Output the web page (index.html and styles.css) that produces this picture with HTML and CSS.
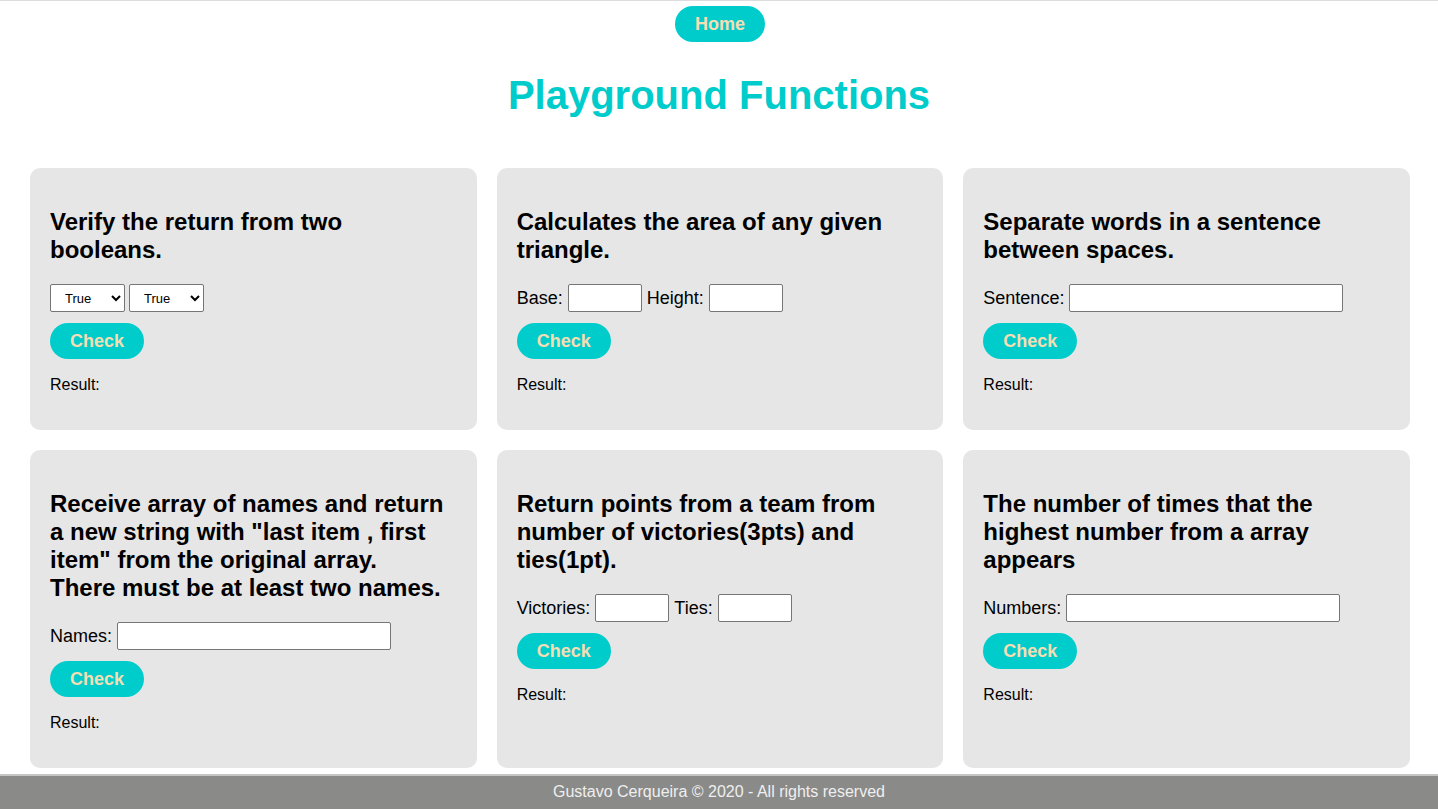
FILE: index.html
```html
<!DOCTYPE html>
<html lang="en">
<head>
<meta charset="utf-8">
<title>Playground Functions</title>
<link rel="stylesheet" href="styles.css">
</head>
<body>
<header class="top">
  <a class="pill home" href="#">Home</a>
</header>
<h1 class="title">Playground Functions</h1>
<main class="grid">
  <section class="card">
    <h2>Verify the return from two booleans.</h2>
    <div class="row row-selects">
      <select class="sel"><option>True</option><option>False</option></select>
      <select class="sel"><option>True</option><option>False</option></select>
    </div>
    <button class="pill check">Check</button>
    <p class="result">Result:</p>
  </section>
  <section class="card">
    <h2>Calculates the area of any given triangle.</h2>
    <div class="row">
      <label>Base:</label><input class="inp short" type="text">
      <label>Height:</label><input class="inp short" type="text">
    </div>
    <button class="pill check">Check</button>
    <p class="result">Result:</p>
  </section>
  <section class="card">
    <h2>Separate words in a sentence between spaces.</h2>
    <div class="row">
      <label>Sentence:</label><input class="inp long" type="text">
    </div>
    <button class="pill check">Check</button>
    <p class="result">Result:</p>
  </section>
  <section class="card">
    <h2>Receive array of names and return a new string with "last item , first item" from the original array. There must be at least two names.</h2>
    <div class="row">
      <label>Names:</label><input class="inp long" type="text">
    </div>
    <button class="pill check">Check</button>
    <p class="result">Result:</p>
  </section>
  <section class="card">
    <h2>Return points from a team from number of victories(3pts) and ties(1pt).</h2>
    <div class="row">
      <label>Victories:</label><input class="inp short" type="text">
      <label>Ties:</label><input class="inp short" type="text">
    </div>
    <button class="pill check">Check</button>
    <p class="result">Result:</p>
  </section>
  <section class="card">
    <h2>The number of times that the highest number from a array appears</h2>
    <div class="row">
      <label>Numbers:</label><input class="inp long" type="text">
    </div>
    <button class="pill check">Check</button>
    <p class="result">Result:</p>
  </section>
</main>
<footer class="footer">Gustavo Cerqueira © 2020 - All rights reserved</footer>
</body>
</html>
```

FILE: styles.css
```css
html, body {
  margin: 0;
  padding: 0;
}
body {
  font-family: "Liberation Sans", Arial, sans-serif;
  background: #ffffff;
  color: #000;
}
.top {
  border-top: 1px solid #dcdcdc;
  display: flex;
  justify-content: center;
  padding-top: 5px;
}
.pill {
  display: inline-flex;
  align-items: center;
  justify-content: center;
  height: 36px;
  padding: 0 20px;
  border: none;
  border-radius: 18px;
  background: #00cccc;
  color: #f5deb3;
  font-family: "Liberation Sans", Arial, sans-serif;
  font-size: 18px;
  font-weight: bold;
  text-decoration: none;
  box-sizing: border-box;
  cursor: pointer;
}
.home {
  margin-left: 2px;
}
.title {
  margin: 30px 0 0;
  text-align: center;
  color: #00cccc;
  font-size: 40px;
  line-height: 46px;
  font-weight: bold;
}
.grid {
  display: grid;
  grid-template-columns: repeat(3, 1fr);
  gap: 20px;
  padding: 0 28px 0 30px;
  margin: 50px 0 6px;
}
.card {
  background: #e6e6e6;
  border-radius: 10px;
  padding: 20px 30px 20px 20px;
  display: flex;
  flex-direction: column;
  align-items: flex-start;
}
.card h2 {
  margin: 20px 0;
  font-size: 24px;
  line-height: 28px;
  font-weight: bold;
}
.row {
  display: flex;
  align-items: center;
  gap: 5px;
  font-size: 18px;
  height: 28px;
}
.row-selects {
  gap: 4px;
}
.sel {
  width: 75px;
  height: 28px;
  font-size: 13px;
  font-family: "Liberation Sans", Arial, sans-serif;
  background: #fff;
  border: 1px solid #767676;
  border-radius: 2px;
  padding: 0 0 0 10px;
  color: #000;
}
.inp {
  height: 28px;
  box-sizing: border-box;
  border: 1px solid #767676;
  border-radius: 2px;
  background: #fff;
  padding: 1px 2px;
  font-size: 13px;
}
.inp.short { width: 74px; }
.inp.long { width: 274px; }
.check {
  margin-top: 11px;
}
.result {
  margin: 17px 0 16px;
  font-size: 16px;
  line-height: 18px;
}
.footer {
  border-top: 2px solid #c6c6c4;
  background: #8a8a88;
  color: #efefef;
  text-align: center;
  font-size: 16px;
  height: 35px;
  line-height: 31px;
  box-sizing: border-box;
}
```
